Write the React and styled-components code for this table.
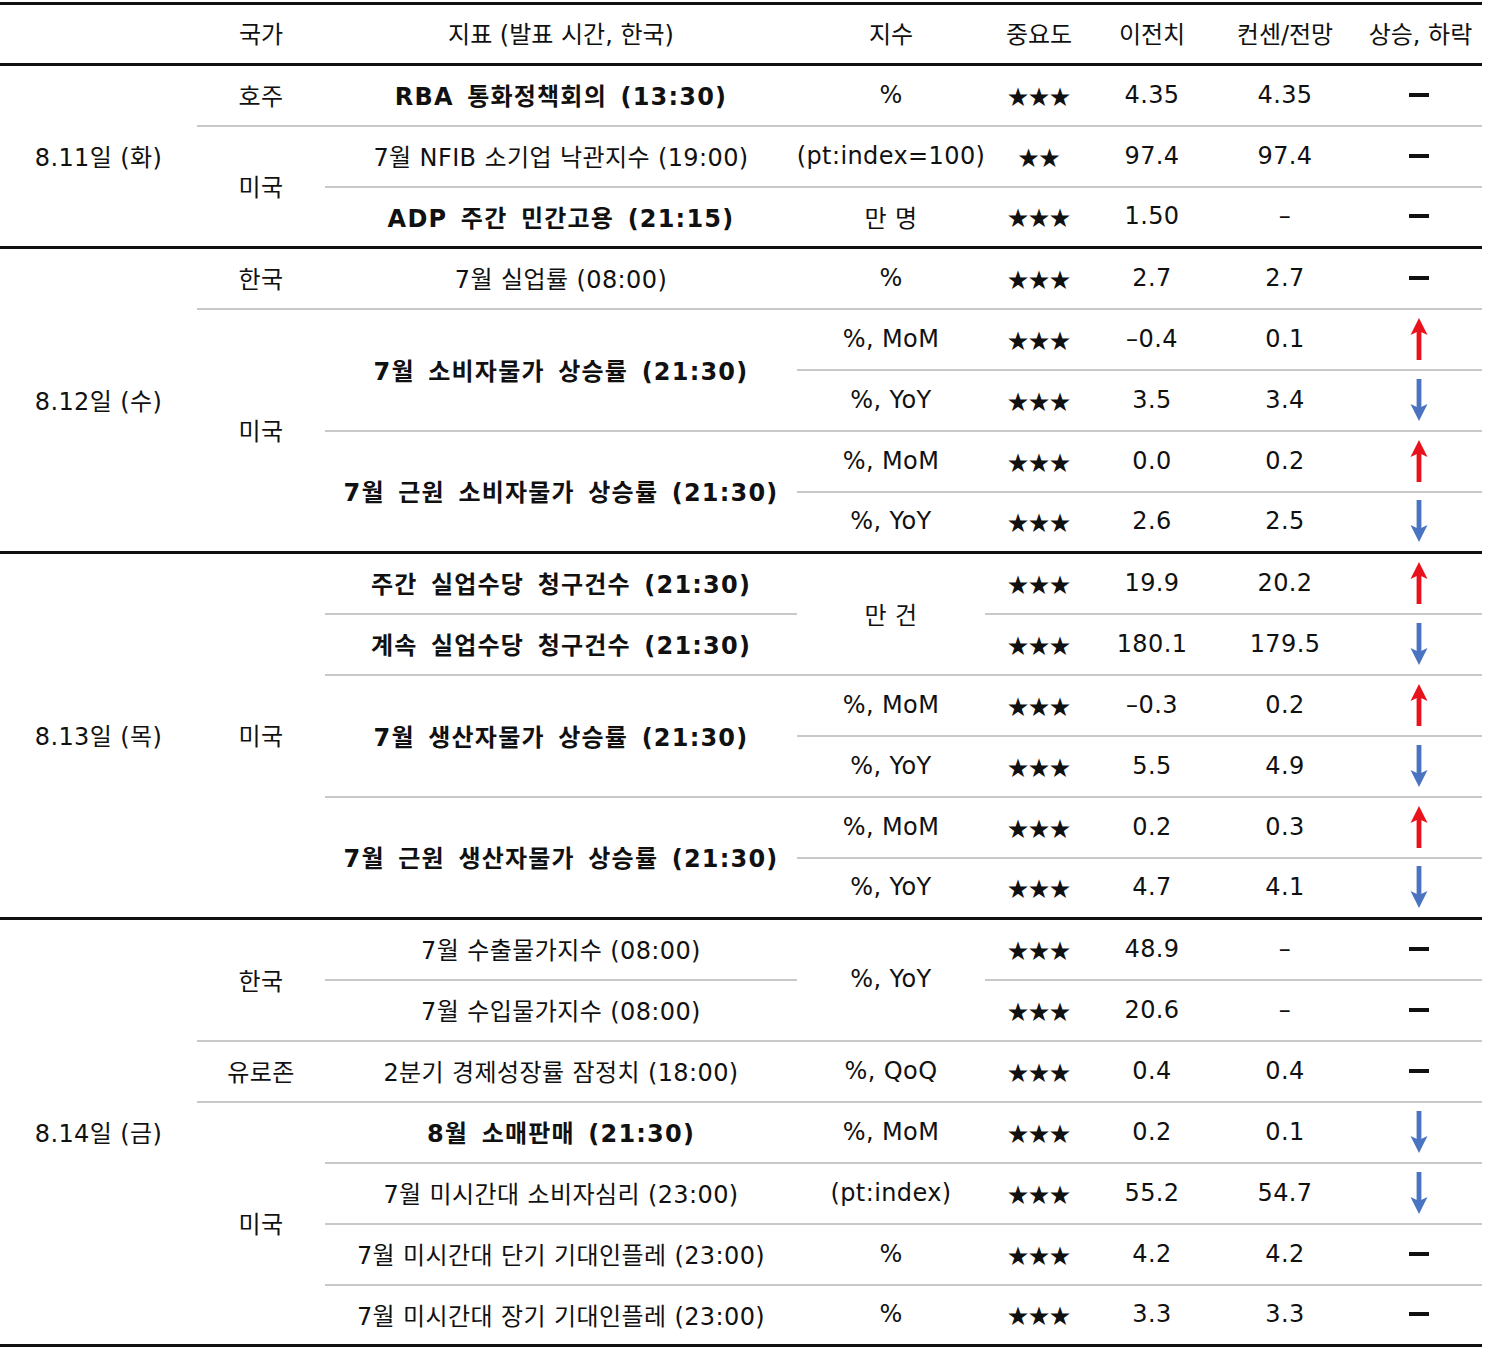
import React from "react";
import styled, { createGlobalStyle } from "styled-components";

const GlobalStyle = createGlobalStyle`
  html, body {
    margin: 0;
    padding: 0;
    background: #fff;
  }
  body {
    font-family: "DejaVu Sans", "Noto Sans CJK KR", sans-serif;
    color: #111;
  }
`;

const Sheet = styled.div`
  width: 1482px;
  margin-top: 2px;
  display: grid;
  grid-template-columns: 197px 128px 472px 188px 108px 118px 148px 123px;
  grid-template-rows: 61px;
  grid-auto-rows: 61px;
  border-top: 3px solid #111;
`;

const HeadCell = styled.div`
  display: flex;
  align-items: center;
  justify-content: center;
  box-sizing: border-box;
  border-bottom: 3px solid #111;
  font-size: 24px;
  padding-bottom: 3px;
  white-space: nowrap;
`;

const Cell = styled.div`
  grid-row: span ${(p) => p.$span || 1};
  display: flex;
  align-items: center;
  justify-content: center;
  box-sizing: border-box;
  padding-bottom: 2px;
  border-bottom: ${(p) =>
    p.$line === "black" ? "3px solid #111" : "2px solid #c9c9c9"};
  font-size: 24px;
  font-weight: ${(p) => (p.$bold ? 700 : 400)};
  letter-spacing: ${(p) => (p.$bold ? "1.2px" : "0.4px")};
  word-spacing: ${(p) => (p.$bold ? "4px" : "0")};
  white-space: nowrap;
`;

const Stars = styled.span`
  font-family: "Noto Sans CJK KR", sans-serif;
  font-size: 21px;
  letter-spacing: 0;
  color: #111;
`;

const Flat = styled.span`
  display: block;
  width: 20px;
  height: 4px;
  margin-right: 4px;
  background: #111;
`;

const ArrowSvg = styled.svg`
  display: block;
  margin-right: 4px;
  transform: ${(p) => (p.$dir === "down" ? "rotate(180deg)" : "none")};
`;

const ArrowIcon = ({ dir }) => {
  const color = dir === "up" ? "#e8121c" : "#4a73c2";
  return (
    <ArrowSvg $dir={dir} width="18" height="42" viewBox="0 0 18 42">
      <rect x="6.6" y="12" width="4.8" height="30" fill={color} />
      <polygon points="9,0 17.5,17 9,13 0.5,17" fill={color} />
    </ArrowSvg>
  );
};

const Trend = ({ dir }) => (dir === "flat" ? <Flat /> : <ArrowIcon dir={dir} />);

const date = (text, span) => ({ text, span });
const nation = (text, span = 1) => ({ text, span });
const ind = (text, span = 1, bold = false) => ({ text, span, bold });
const unit = (text, span = 1) => ({ text, span });
const star = (n) => ({ stars: n });
const val = (text) => ({ text });
const trend = (dir) => ({ trend: dir });

const rows = [
  [date("8.11일 (화)", 3), nation("호주"), ind("RBA 통화정책회의 (13:30)", 1, true), unit("%"), star(3), val("4.35"), val("4.35"), trend("flat")],
  [nation("미국", 2), ind("7월 NFIB 소기업 낙관지수 (19:00)"), unit("(pt:index=100)"), star(2), val("97.4"), val("97.4"), trend("flat")],
  [ind("ADP 주간 민간고용 (21:15)", 1, true), unit("만 명"), star(3), val("1.50"), val("–"), trend("flat")],

  [date("8.12일 (수)", 5), nation("한국"), ind("7월 실업률 (08:00)"), unit("%"), star(3), val("2.7"), val("2.7"), trend("flat")],
  [nation("미국", 4), ind("7월 소비자물가 상승률 (21:30)", 2, true), unit("%, MoM"), star(3), val("–0.4"), val("0.1"), trend("up")],
  [unit("%, YoY"), star(3), val("3.5"), val("3.4"), trend("down")],
  [ind("7월 근원 소비자물가 상승률 (21:30)", 2, true), unit("%, MoM"), star(3), val("0.0"), val("0.2"), trend("up")],
  [unit("%, YoY"), star(3), val("2.6"), val("2.5"), trend("down")],

  [date("8.13일 (목)", 6), nation("미국", 6), ind("주간 실업수당 청구건수 (21:30)", 1, true), unit("만 건", 2), star(3), val("19.9"), val("20.2"), trend("up")],
  [ind("계속 실업수당 청구건수 (21:30)", 1, true), star(3), val("180.1"), val("179.5"), trend("down")],
  [ind("7월 생산자물가 상승률 (21:30)", 2, true), unit("%, MoM"), star(3), val("–0.3"), val("0.2"), trend("up")],
  [unit("%, YoY"), star(3), val("5.5"), val("4.9"), trend("down")],
  [ind("7월 근원 생산자물가 상승률 (21:30)", 2, true), unit("%, MoM"), star(3), val("0.2"), val("0.3"), trend("up")],
  [unit("%, YoY"), star(3), val("4.7"), val("4.1"), trend("down")],

  [date("8.14일 (금)", 7), nation("한국", 2), ind("7월 수출물가지수 (08:00)"), unit("%, YoY", 2), star(3), val("48.9"), val("–"), trend("flat")],
  [ind("7월 수입물가지수 (08:00)"), star(3), val("20.6"), val("–"), trend("flat")],
  [nation("유로존"), ind("2분기 경제성장률 잠정치 (18:00)"), unit("%, QoQ"), star(3), val("0.4"), val("0.4"), trend("flat")],
  [nation("미국", 4), ind("8월 소매판매 (21:30)", 1, true), unit("%, MoM"), star(3), val("0.2"), val("0.1"), trend("down")],
  [ind("7월 미시간대 소비자심리 (23:00)"), unit("(pt:index)"), star(3), val("55.2"), val("54.7"), trend("down")],
  [ind("7월 미시간대 단기 기대인플레 (23:00)"), unit("%"), star(3), val("4.2"), val("4.2"), trend("flat")],
  [ind("7월 미시간대 장기 기대인플레 (23:00)"), unit("%"), star(3), val("3.3"), val("3.3"), trend("flat")],
];

// last row index of each day block gets the heavy rule
const dayEnds = [2, 7, 13, 20];

const headers = ["", "국가", "지표 (발표 시간, 한국)", "지수", "중요도", "이전치", "컨센/전망", "상승, 하락"];

function cellContent(cell) {
  if (cell.stars) return <Stars>{"★".repeat(cell.stars)}</Stars>;
  if (cell.trend) return <Trend dir={cell.trend} />;
  return cell.text;
}

export default function App() {
  return (
    <>
      <GlobalStyle />
      <Sheet>
        {headers.map((h, i) => (
          <HeadCell key={`h${i}`}>{h}</HeadCell>
        ))}
        {rows.map((row, r) =>
          row.map((cell, c) => {
            const span = cell.span || 1;
            const end = r + span - 1;
            const line = dayEnds.includes(end) ? "black" : "gray";
            return (
              <Cell key={`${r}-${c}`} $span={span} $line={line} $bold={cell.bold}>
                {cellContent(cell)}
              </Cell>
            );
          })
        )}
      </Sheet>
    </>
  );
}
